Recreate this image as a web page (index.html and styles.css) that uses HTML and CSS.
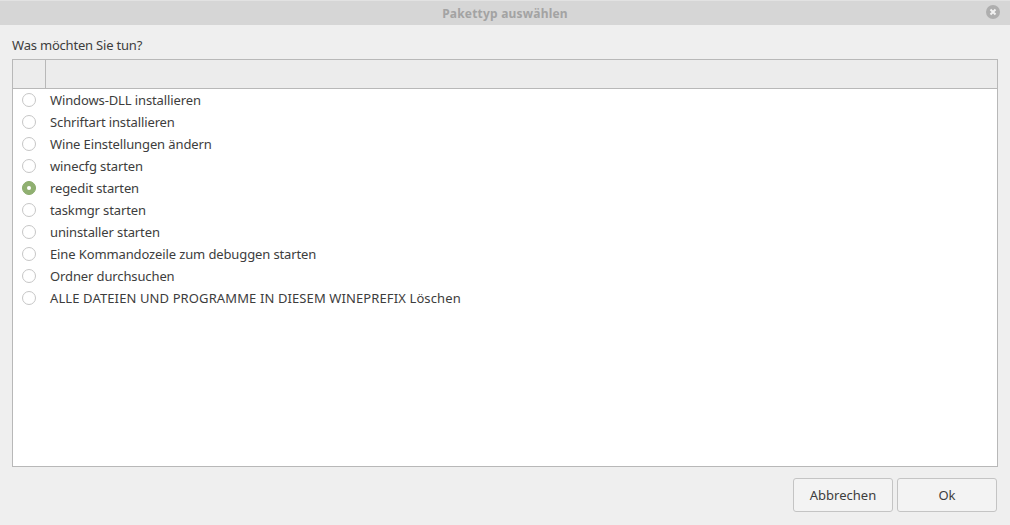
FILE: index.html
```html
<!DOCTYPE html>
<html lang="de">
<head>
<meta charset="utf-8">
<title>Pakettyp auswählen</title>
<link rel="stylesheet" href="styles.css">
</head>
<body>
<div class="window">
  <header class="titlebar">
    <span class="title">Pakettyp auswählen</span>
    <span class="close">
      <svg width="14" height="14" viewBox="0 0 14 14"><circle cx="7" cy="7" r="7" fill="#aeaeae"/><path d="M4.5 4.5l5 5M9.5 4.5l-5 5" stroke="#f2f2f2" stroke-width="2"/></svg>
    </span>
  </header>
  <main class="content">
    <div class="prompt">Was möchten Sie tun?</div>
    <div class="table">
      <div class="thead"><div class="th-first"></div><div class="th-rest"></div></div>
      <ul class="rows">
        <li class="row"><span class="radio"></span><span class="label">Windows-DLL installieren</span></li>
        <li class="row"><span class="radio"></span><span class="label">Schriftart installieren</span></li>
        <li class="row"><span class="radio"></span><span class="label">Wine Einstellungen ändern</span></li>
        <li class="row"><span class="radio"></span><span class="label">winecfg starten</span></li>
        <li class="row"><span class="radio checked"></span><span class="label">regedit starten</span></li>
        <li class="row"><span class="radio"></span><span class="label">taskmgr starten</span></li>
        <li class="row"><span class="radio"></span><span class="label">uninstaller starten</span></li>
        <li class="row"><span class="radio"></span><span class="label">Eine Kommandozeile zum debuggen starten</span></li>
        <li class="row"><span class="radio"></span><span class="label">Ordner durchsuchen</span></li>
        <li class="row"><span class="radio"></span><span class="label caps">ALLE DATEIEN UND PROGRAMME IN DIESEM WINEPREFIX Löschen</span></li>
      </ul>
    </div>
    <div class="actions">
      <button class="btn">Abbrechen</button>
      <button class="btn">Ok</button>
    </div>
  </main>
</div>
</body>
</html>
```
FILE: styles.css
```css
* { box-sizing: border-box; }
html, body { margin: 0; height: 100%; }
body {
  font-family: "Noto Sans", sans-serif;
  font-size: 13px;
  color: #3d3d3d;
  background: #efefef;
  overflow: hidden;
}
.window { height: 525px; display: flex; flex-direction: column; }
.titlebar {
  height: 25px;
  flex: none;
  background: #d6d6d6;
  border-top: 1px solid #e2e2e2;
  display: flex;
  align-items: center;
  justify-content: center;
  position: relative;
}
.title { font-weight: 700; font-size: 12px; color: #a3a3a3; letter-spacing: 0.2px; }
.close { position: absolute; left: 986px; top: 4px; width: 14px; height: 14px; display: flex; }
.content { flex: 1; display: flex; flex-direction: column; padding: 0 12px 13px; min-height: 0; }
.prompt { height: 34px; line-height: 18px; padding-top: 11px; flex: none; letter-spacing: -0.2px; }
.table {
  height: 408px;
  width: 986px;
  flex: none;
  border: 1px solid #b8b8b8;
  background: #fff;
  display: flex;
  flex-direction: column;
}
.thead {
  height: 29px;
  flex: none;
  display: flex;
  background: #ececec;
  border-bottom: 1px solid #b8b8b8;
}
.th-first { width: 33px; border-right: 1px solid #b8b8b8; }
.th-rest { flex: 1; }
.rows { list-style: none; margin: 0; padding: 0; }
.row { height: 22px; display: flex; align-items: center; padding-left: 9px; }
.radio {
  width: 14px;
  height: 14px;
  border-radius: 50%;
  border: 1px solid #c6c6c6;
  background: #fff;
  flex: none;
}
.radio.checked {
  background: #90b071;
  border-color: #8aab6b;
  display: flex;
  align-items: center;
  justify-content: center;
}
.radio.checked::after {
  content: "";
  width: 4px;
  height: 4px;
  border-radius: 50%;
  background: #fff;
}
.label { margin-left: 14px; white-space: nowrap; letter-spacing: -0.12px; }
.label.caps { letter-spacing: 0.11px; }
.actions { display: flex; justify-content: flex-end; gap: 4px; margin-top: 11px; padding-right: 1px; }
.btn {
  width: 100px;
  height: 34px;
  font: inherit;
  color: #3d3d3d;
  background: #f3f3f3;
  border: 1px solid #c4c4c4;
  border-radius: 3px;
  padding: 0;
}
```
